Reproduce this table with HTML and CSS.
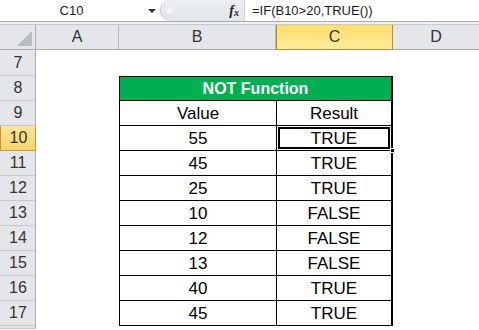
FILE: index.html
```html
<!DOCTYPE html>
<html>
<head>
<meta charset="utf-8">
<link rel="stylesheet" href="styles.css">
</head>
<body>
<div class="app">
  <div class="fbar">
    <div class="namebox">C10</div>
    <div class="nb-arrow"><span class="tri"></span></div>
    <div class="fx-area">
      <span class="knob"></span>
      <span class="fx">f<span class="fx-x">x</span></span>
    </div>
    <div class="formula">=IF(B10&gt;20,TRUE())</div>
  </div>
  <div class="gap"></div>
  <div class="sheet">
    <div class="row hdr">
      <div class="rh corner"><span class="corner-tri"></span></div>
      <div class="ch">A</div>
      <div class="ch">B</div>
      <div class="ch sel">C</div>
      <div class="ch">D</div>
    </div>
    <div class="row r7">
      <div class="rh">7</div><div></div><div></div><div></div><div></div>
    </div>
    <div class="row">
      <div class="rh">8</div><div></div>
      <div class="title">NOT Function</div>
      <div></div>
    </div>
    <div class="row">
      <div class="rh">9</div><div></div>
      <div class="cb">Value</div><div class="cc">Result</div><div></div>
    </div>
    <div class="row">
      <div class="rh rsel">10</div><div></div>
      <div class="cb">55</div><div class="cc active">TRUE<span class="handle"></span></div><div></div>
    </div>
    <div class="row">
      <div class="rh">11</div><div></div>
      <div class="cb">45</div><div class="cc">TRUE</div><div></div>
    </div>
    <div class="row">
      <div class="rh">12</div><div></div>
      <div class="cb">25</div><div class="cc">TRUE</div><div></div>
    </div>
    <div class="row">
      <div class="rh">13</div><div></div>
      <div class="cb">10</div><div class="cc">FALSE</div><div></div>
    </div>
    <div class="row">
      <div class="rh">14</div><div></div>
      <div class="cb">12</div><div class="cc">FALSE</div><div></div>
    </div>
    <div class="row">
      <div class="rh">15</div><div></div>
      <div class="cb">13</div><div class="cc">FALSE</div><div></div>
    </div>
    <div class="row">
      <div class="rh">16</div><div></div>
      <div class="cb">40</div><div class="cc">TRUE</div><div></div>
    </div>
    <div class="row">
      <div class="rh">17</div><div></div>
      <div class="cb">45</div><div class="cc">TRUE</div><div></div>
    </div>
    <div class="row stub">
      <div class="rh"></div><div></div><div></div><div></div><div></div>
    </div>
  </div>
</div>
</body>
</html>
```
FILE: styles.css
```css
* { box-sizing: border-box; }
html, body { margin: 0; padding: 0; background: #fff; }
body { width: 479px; height: 330px; overflow: hidden; font-family: "Liberation Sans", Arial, sans-serif; }

.fbar {
  display: flex;
  height: 22px;
  background: #fff;
  border-bottom: 1px solid #a6aaaf;
}
.namebox {
  width: 143px;
  text-align: center;
  font-size: 13px;
  line-height: 22px;
  color: #1a1a1a;
}
.nb-arrow {
  width: 17px;
  display: flex;
  align-items: center;
  padding-left: 5px;
}
.tri {
  width: 0; height: 0;
  border-left: 4px solid transparent;
  border-right: 4px solid transparent;
  border-top: 4px solid #333;
}
.fx-area {
  width: 85px;
  display: flex;
  align-items: center;
  justify-content: space-between;
  padding: 0 5px 0 4px;
  background: linear-gradient(#eceef1, #e2e5e9);
  border-left: 1px solid #c3c6cb;
  border-radius: 10px 0 0 10px;
  border-right: 1px solid #d2d5d9;
}
.knob {
  width: 10px; height: 10px;
  border-radius: 50%;
  background: radial-gradient(circle at 50% 40%, #ffffff, #d4d7db);
  opacity: 0.8;
}
.fx {
  font-family: "Liberation Serif", "Times New Roman", serif;
  font-style: italic;
  font-weight: bold;
  font-size: 14px;
  color: #222;
  line-height: 1;
}
.fx-x { font-size: 10px; position: relative; top: 1px; }
.formula {
  flex: 1;
  padding-left: 7px;
  font-size: 13px;
  line-height: 22px;
  color: #1a1a1a;
}
.gap {
  height: 3px;
  background: #f0f1f3;
  border-bottom: 1px solid #c6c9cd;
}

.row {
  display: grid;
  grid-template-columns: 36px 83px 157px 117px 86px;
  height: 25px;
}
.row.r7 { height: 26px; }
.hdr { height: 25px; }
.row.stub { height: 3px; }

.rh {
  background: #e4e6ea;
  border-right: 1px solid #a9adb2;
  border-bottom: 1px solid #c4c7cc;
  font-size: 16px;
  color: #333;
  display: flex;
  align-items: center;
  justify-content: center;
  padding-left: 1px;
}
.rh.rsel {
  background: linear-gradient(#fbe59a, #f7d469);
  border: 1px solid #c9973a;
  border-top: none;
}
.corner {
  position: relative;
  border-bottom: 1px solid #a9adb2;
}
.corner-tri {
  position: absolute;
  right: 3px; bottom: 3px;
  width: 15px; height: 15px;
  background: #b9bcc1;
  clip-path: polygon(100% 0, 100% 100%, 0 100%);
}
.ch {
  background: #e4e6ea;
  border-right: 1px solid #b3b6bb;
  border-bottom: 1px solid #a9adb2;
  font-size: 16px;
  color: #333;
  display: flex;
  align-items: center;
  justify-content: center;
}
.ch:last-child { border-right: none; }
.ch.sel {
  background: linear-gradient(#fddd6a, #fdec9c);
  border: 1px solid #c28b2f;
  border-top: none;
  border-left: 1px solid #c28b2f;
}

.title {
  grid-column: span 2;
  background: #00b050;
  color: #fff;
  font-weight: bold;
  font-size: 16px;
  display: flex;
  align-items: center;
  justify-content: center;
  border: 1px solid #000;
  border-right-width: 2px;
  padding-top: 1px;
}
.cb, .cc {
  font-size: 17px;
  color: #000;
  display: flex;
  align-items: center;
  justify-content: center;
  border-left: 1px solid #000;
  border-bottom: 1px solid #000;
  padding-top: 1px;
}
.cc { border-right: 2px solid #000; }
.active {
  position: relative;
  box-shadow: inset 0 0 0 1px #fff, inset 0 0 0 3px #000;
}
.handle {
  position: absolute;
  right: -4px; bottom: -3px;
  width: 5px; height: 5px;
  background: #000;
  border: 1px solid #fff;
}
```
